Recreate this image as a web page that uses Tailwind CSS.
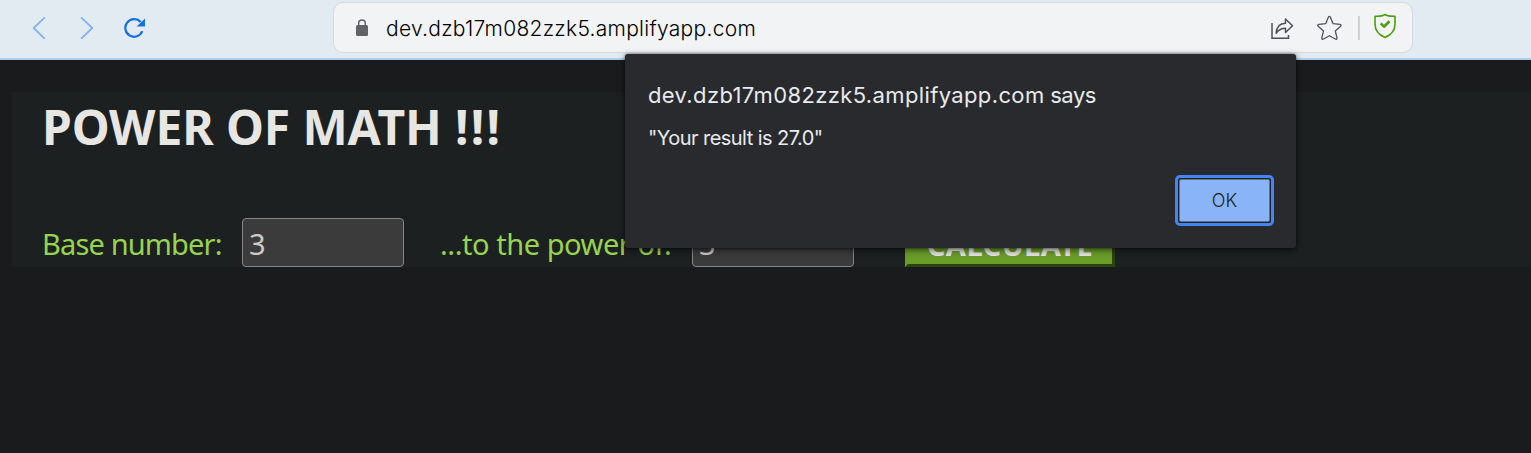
<!DOCTYPE html>
<html lang="en">
<head>
<meta charset="utf-8">
<title>Power of Math</title>
<script src="https://cdn.jsdelivr.net/npm/@tailwindcss/browser@4"></script>
</head>
<body class="h-[453px] overflow-hidden bg-[#1a1b1d] relative font-['Noto_Sans',sans-serif]">
<header class="h-[60px] bg-[#e2eaf2] border-b-2 border-[#b0cceb] flex items-start">
  <nav class="flex w-[333px] shrink-0 pl-[29px] pt-[17px] gap-[25px]">
    <svg class="w-[22px] h-[22px]" viewBox="0 0 22 22" fill="none" stroke="#86b3ea" stroke-width="1.8" stroke-linecap="round" stroke-linejoin="round"><path d="M15.300.8L4.700 11l10.600 10.300"/></svg>
    <svg class="w-[22px] h-[22px]" viewBox="0 0 22 22" fill="none" stroke="#86b3ea" stroke-width="1.8" stroke-linecap="round" stroke-linejoin="round"><path d="M5.600.8L16.200 11L5.600 21.300"/></svg>
    <svg class="ml-px w-[22px] h-[22px]" viewBox="0 0 22 22"><path d="M18.300 14.200A8.800 8.800 0 1 1 16.600 5" fill="none" stroke="#1672dc" stroke-width="2.200"/><path d="M21 1.500V9.500H12.600Z" fill="#1672dc"/></svg>
  </nav>
  <div class="mt-[2px] w-[1080px] h-[51px] rounded-[10px] border border-[#d8d9da] bg-[#f1f3f4] flex items-center pl-[21px] pr-[15px]">
    <svg class="w-[14px] h-[18px] mt-px" viewBox="0 0 14 18"><path d="M3.700 7V4.300a3.300 3.300 0 0 1 6.600 0V7" fill="none" stroke="#5f6368" stroke-width="1.500"/><rect x="1" y="6" width="12" height="11" rx="1.500" fill="#5f6368"/></svg>
    <span class="ml-[17px] mt-[2px] flex-1 font-['Inter'] font-light text-[21px] tracking-[0.28px] text-black whitespace-nowrap">dev.dzb17m082zzk5.amplifyapp.com</span>
    <svg class="w-[24px] h-[24px]" viewBox="0 0 24 24" fill="none" stroke="#4d5156" stroke-width="1.500"><path d="M2 7V22.300H18.500V19"/><path d="M6.200 17.200C6.500 11 9.500 7.300 15.500 7.200V3L22.500 9.800L15.500 16.500V12.300C10.500 12.200 8.500 14 6.200 17.200Z" stroke-linejoin="round"/></svg>
    <svg class="ml-[22px] w-[26px] h-[26px]" viewBox="0 0 26 26" fill="none" stroke="#505357" stroke-width="1.300" stroke-linejoin="round"><path d="M12.400 2.200Q13.400.6 14.400 2.200L17 8.600L24 9.400Q25.800 10 24.600 11.300L19.300 15.900L21 22.800Q21 24.800 19.300 24L13.400 20.700L7.500 24Q5.700 24.800 5.800 22.800L7.500 15.900L2.200 11.300Q1 10 2.800 9.400L9.800 8.600Z"/></svg>
    <span class="ml-[16px] w-[2px] h-[24px] bg-[#ced0d2]"></span>
    <svg class="ml-[13px] w-[24px] h-[26px] mb-[3px]" viewBox="0 0 24 26" fill="none" stroke="#4da00c" stroke-linejoin="round"><path stroke-width="1.600" d="M12 1.500Q9 3.500 2 3.200V11C2 17.500 6 22 12 24.500C18 22 22 17.500 22 11V3.200Q15 3.500 12 1.500Z"/><path stroke-width="2.600" d="M7.700 10.400L11 13.700L16.500 8.300"/></svg>
  </div>
</header>
<main class="ml-[12px] mt-[32px] h-[175px] bg-[#1c2021] pl-[30px]">
  <h1 class="pt-[3px] h-[126px] font-bold text-[48px] leading-[64px] tracking-[-0.1px] text-[#e8e6e3] whitespace-nowrap">POWER OF MATH <span class="ml-px tracking-[2.2px]">!!!</span></h1>
  <form class="flex h-[49px] text-[29px] leading-[49px] text-[#98d350]">
    <label class="w-[200px] whitespace-nowrap pt-px tracking-[-0.85px]">Base number:</label>
    <div class="w-[162px] h-[49px] rounded-[4px] border border-[#858585] bg-[#3b3b3b] text-[#cecbc7] pl-[6px]">3</div>
    <label class="ml-[36px] w-[252px] whitespace-nowrap pt-px tracking-[-0.45px]">...to the power of:</label>
    <div class="w-[162px] h-[49px] rounded-[4px] border border-[#858585] bg-[#3b3b3b] text-[#cecbc7] pl-[6px]">3</div>
    <button type="button" class="ml-[51px] w-[210px] h-[49px] border-[3px] border-t-[#6b9d2a] border-l-[#6b9d2a] border-r-[#2c4210] border-b-[#2c4210] bg-[#6b9d2a] text-[#e8e6e3] font-bold text-[29px] tracking-[0.5px] leading-[43px] pt-[2px] whitespace-nowrap">CALCULATE</button>
  </form>
</main>
<section role="dialog" class="absolute left-[625px] top-[54px] w-[671px] h-[194px] rounded-[3px] bg-[#292a2d] shadow-[0_0_2px_#0008,0_2px_7px_#0009] font-['Inter'] text-[#e8eaed] pl-[23px] pr-[22px] flex flex-col">
  <h2 class="mt-[26px] h-[30px] text-[22px] leading-[30px] tracking-[0.37px] whitespace-nowrap">dev.dzb17m082zzk5.amplifyapp.com<span class="tracking-[-0.5px]"> says</span></h2>
  <p class="mt-[14px] h-[28px] text-[20px] leading-[28px] tracking-[-0.55px] whitespace-nowrap">"Your result is 27.0"</p>
  <button type="button" class="mt-[23px] self-end w-[99px] h-[51px] rounded-[5px] border-[3px] border-[#4285f4] p-[1px] bg-[#202124]"><span class="flex h-full w-full items-center justify-center rounded-[2px] border border-[#5f6d85] bg-[#8ab4f8] text-[#202124] text-[18px] font-light">OK</span></button>
</section>
</body>
</html>
